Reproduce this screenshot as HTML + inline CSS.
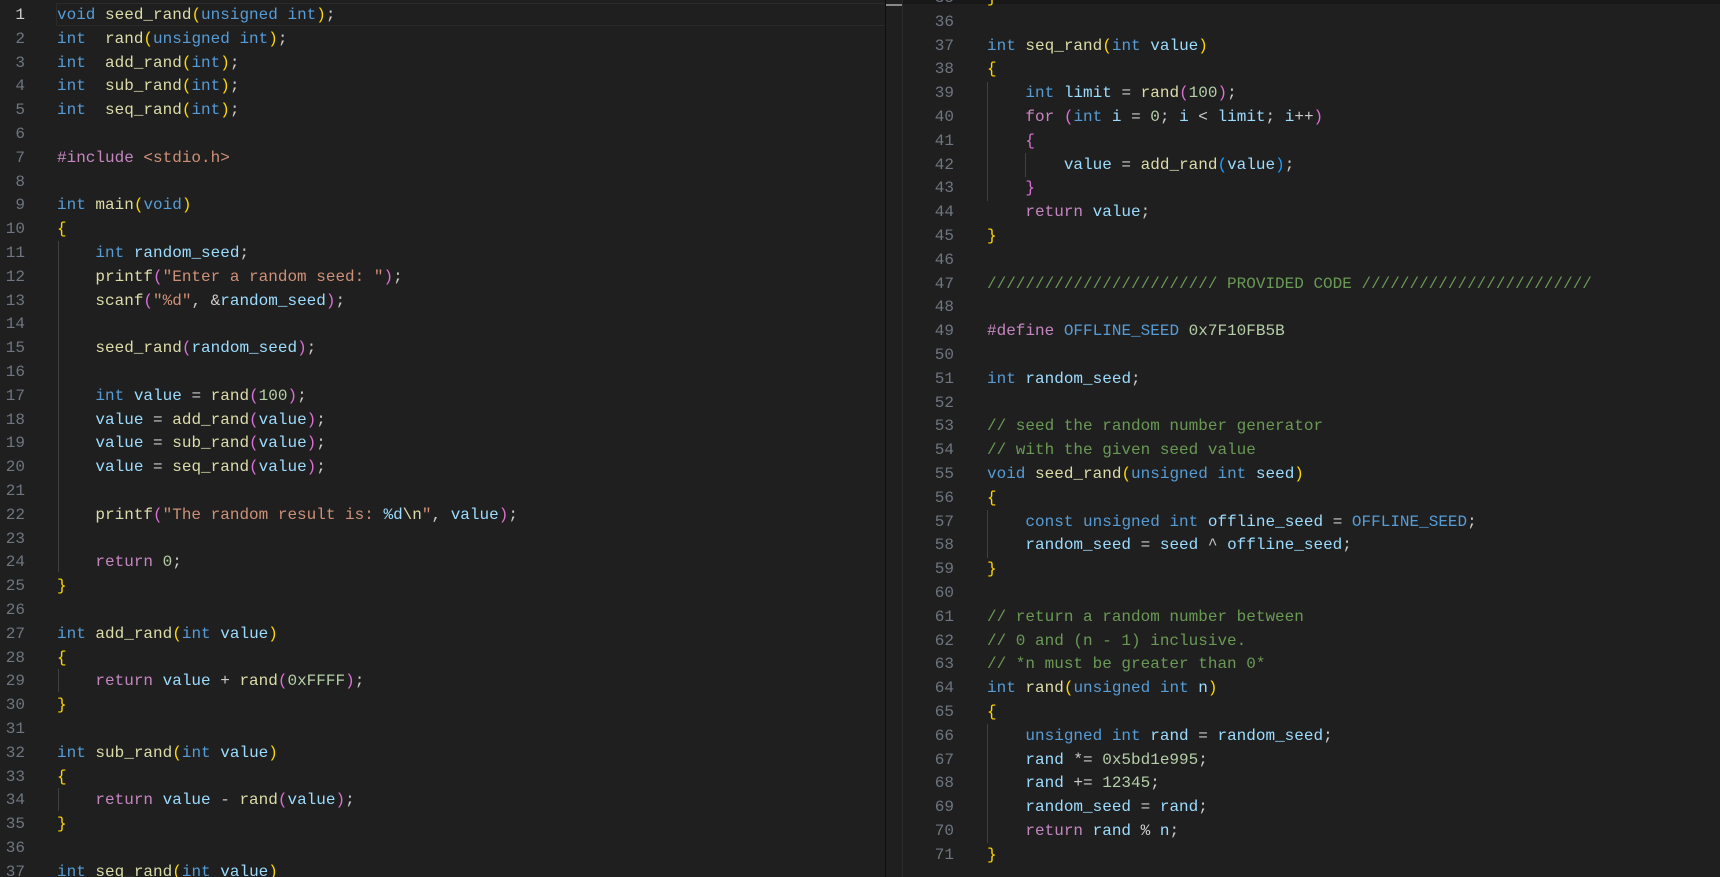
<!DOCTYPE html>
<html><head><meta charset="utf-8"><style>
body{margin:0;width:1720px;height:877px;background:#1f1f1f;overflow:hidden;position:relative;font-family:"Liberation Mono",monospace;font-size:16px}
.pane{position:absolute;top:0;height:877px;overflow:hidden}
.ln{position:absolute;text-align:right;color:#6e7681;white-space:pre;line-height:23.8px}
.code{position:absolute;color:#cccccc;white-space:pre;line-height:23.8px}
.k{color:#569cd6}.f{color:#dcdcaa}.v{color:#9cdcfe}.s{color:#ce9178}.n{color:#b5cea8}.c{color:#6a9955}.p{color:#c586c0}
.b1{color:#ffd700}.b2{color:#da70d6}.b3{color:#179fff}
.g{position:absolute;width:1px;background:#404040}
</style></head><body>
<div class="pane" style="left:0;width:886px;background:#1f1f1f">
<div style="position:absolute;left:56px;top:3px;width:830px;height:23px;border:1px solid #2a2a2a;box-sizing:border-box"></div>
<div class="g" style="left:58px;top:241px;height:331px"></div>
<div class="g" style="left:58px;top:669px;height:23px"></div>
<div class="g" style="left:58px;top:788px;height:23px"></div>
<div class="ln" style="left:0;width:25px;top:4px"><span style="color:#ccc">1</span>
2
3
4
5
6
7
8
9
10
11
12
13
14
15
16
17
18
19
20
21
22
23
24
25
26
27
28
29
30
31
32
33
34
35
36
37</div>
<div class="code" style="left:57px;top:4px"><span class="k">void</span> <span class="f">seed_rand</span><span class="b1">(</span><span class="k">unsigned</span> <span class="k">int</span><span class="b1">)</span>;
<span class="k">int</span>  <span class="f">rand</span><span class="b1">(</span><span class="k">unsigned</span> <span class="k">int</span><span class="b1">)</span>;
<span class="k">int</span>  <span class="f">add_rand</span><span class="b1">(</span><span class="k">int</span><span class="b1">)</span>;
<span class="k">int</span>  <span class="f">sub_rand</span><span class="b1">(</span><span class="k">int</span><span class="b1">)</span>;
<span class="k">int</span>  <span class="f">seq_rand</span><span class="b1">(</span><span class="k">int</span><span class="b1">)</span>;

<span class="p">#include</span> <span class="s">&lt;stdio.h&gt;</span>

<span class="k">int</span> <span class="f">main</span><span class="b1">(</span><span class="k">void</span><span class="b1">)</span>
<span class="b1">{</span>
    <span class="k">int</span> <span class="v">random_seed</span>;
    <span class="f">printf</span><span class="b2">(</span><span class="s">"Enter a random seed: "</span><span class="b2">)</span>;
    <span class="f">scanf</span><span class="b2">(</span><span class="s">"%d"</span>, &amp;<span class="v">random_seed</span><span class="b2">)</span>;

    <span class="f">seed_rand</span><span class="b2">(</span><span class="v">random_seed</span><span class="b2">)</span>;

    <span class="k">int</span> <span class="v">value</span> = <span class="f">rand</span><span class="b2">(</span><span class="n">100</span><span class="b2">)</span>;
    <span class="v">value</span> = <span class="f">add_rand</span><span class="b2">(</span><span class="v">value</span><span class="b2">)</span>;
    <span class="v">value</span> = <span class="f">sub_rand</span><span class="b2">(</span><span class="v">value</span><span class="b2">)</span>;
    <span class="v">value</span> = <span class="f">seq_rand</span><span class="b2">(</span><span class="v">value</span><span class="b2">)</span>;

    <span class="f">printf</span><span class="b2">(</span><span class="s">"The random result is: </span><span class="v">%d</span><span class="f">\n</span><span class="s">"</span>, <span class="v">value</span><span class="b2">)</span>;

    <span class="p">return</span> <span class="n">0</span>;
<span class="b1">}</span>

<span class="k">int</span> <span class="f">add_rand</span><span class="b1">(</span><span class="k">int</span> <span class="v">value</span><span class="b1">)</span>
<span class="b1">{</span>
    <span class="p">return</span> <span class="v">value</span> + <span class="f">rand</span><span class="b2">(</span><span class="n">0xFFFF</span><span class="b2">)</span>;
<span class="b1">}</span>

<span class="k">int</span> <span class="f">sub_rand</span><span class="b1">(</span><span class="k">int</span> <span class="v">value</span><span class="b1">)</span>
<span class="b1">{</span>
    <span class="p">return</span> <span class="v">value</span> - <span class="f">rand</span><span class="b2">(</span><span class="v">value</span><span class="b2">)</span>;
<span class="b1">}</span>

<span class="k">int</span> <span class="f">seq_rand</span><span class="b1">(</span><span class="k">int</span> <span class="v">value</span><span class="b1">)</span></div>
</div>
<div style="position:absolute;left:885px;top:0;width:1px;height:877px;background:#0e0e0e"></div>
<div style="position:absolute;left:886px;top:0;width:16px;height:877px;background:#1f1f1f"></div>
<div style="position:absolute;left:886px;top:4px;width:16px;height:2px;background:#888"></div>
<div style="position:absolute;left:902px;top:0;width:1px;height:877px;background:#2b2b2b"></div>
<div class="pane" style="left:903px;width:817px;background:#1f1f1f">
<div style="position:absolute;left:0;top:0;width:817px;height:4px;background:#181818"></div>
<div class="g" style="left:84px;top:82px;height:119px"></div>
<div class="g" style="left:122px;top:153px;height:24px"></div>
<div class="g" style="left:84px;top:510px;height:48px"></div>
<div class="g" style="left:84px;top:724px;height:119px"></div>
<div class="ln" style="left:0;width:51px;top:-13px">35
36
37
38
39
40
41
42
43
44
45
46
47
48
49
50
51
52
53
54
55
56
57
58
59
60
61
62
63
64
65
66
67
68
69
70
71</div>
<div class="code" style="left:84px;top:-13px"><span class="b1">}</span>

<span class="k">int</span> <span class="f">seq_rand</span><span class="b1">(</span><span class="k">int</span> <span class="v">value</span><span class="b1">)</span>
<span class="b1">{</span>
    <span class="k">int</span> <span class="v">limit</span> = <span class="f">rand</span><span class="b2">(</span><span class="n">100</span><span class="b2">)</span>;
    <span class="p">for</span> <span class="b2">(</span><span class="k">int</span> <span class="v">i</span> = <span class="n">0</span>; <span class="v">i</span> &lt; <span class="v">limit</span>; <span class="v">i</span>++<span class="b2">)</span>
    <span class="b2">{</span>
        <span class="v">value</span> = <span class="f">add_rand</span><span class="b3">(</span><span class="v">value</span><span class="b3">)</span>;
    <span class="b2">}</span>
    <span class="p">return</span> <span class="v">value</span>;
<span class="b1">}</span>

<span class="c">//////////////////////// PROVIDED CODE ////////////////////////</span>

<span class="p">#define</span> <span class="k">OFFLINE_SEED</span> <span class="n">0x7F10FB5B</span>

<span class="k">int</span> <span class="v">random_seed</span>;

<span class="c">// seed the random number generator</span>
<span class="c">// with the given seed value</span>
<span class="k">void</span> <span class="f">seed_rand</span><span class="b1">(</span><span class="k">unsigned</span> <span class="k">int</span> <span class="v">seed</span><span class="b1">)</span>
<span class="b1">{</span>
    <span class="k">const</span> <span class="k">unsigned</span> <span class="k">int</span> <span class="v">offline_seed</span> = <span class="k">OFFLINE_SEED</span>;
    <span class="v">random_seed</span> = <span class="v">seed</span> ^ <span class="v">offline_seed</span>;
<span class="b1">}</span>

<span class="c">// return a random number between</span>
<span class="c">// 0 and (n - 1) inclusive.</span>
<span class="c">// *n must be greater than 0*</span>
<span class="k">int</span> <span class="f">rand</span><span class="b1">(</span><span class="k">unsigned</span> <span class="k">int</span> <span class="v">n</span><span class="b1">)</span>
<span class="b1">{</span>
    <span class="k">unsigned</span> <span class="k">int</span> <span class="v">rand</span> = <span class="v">random_seed</span>;
    <span class="v">rand</span> *= <span class="n">0x5bd1e995</span>;
    <span class="v">rand</span> += <span class="n">12345</span>;
    <span class="v">random_seed</span> = <span class="v">rand</span>;
    <span class="p">return</span> <span class="v">rand</span> % <span class="v">n</span>;
<span class="b1">}</span></div>
</div>
</body></html>
